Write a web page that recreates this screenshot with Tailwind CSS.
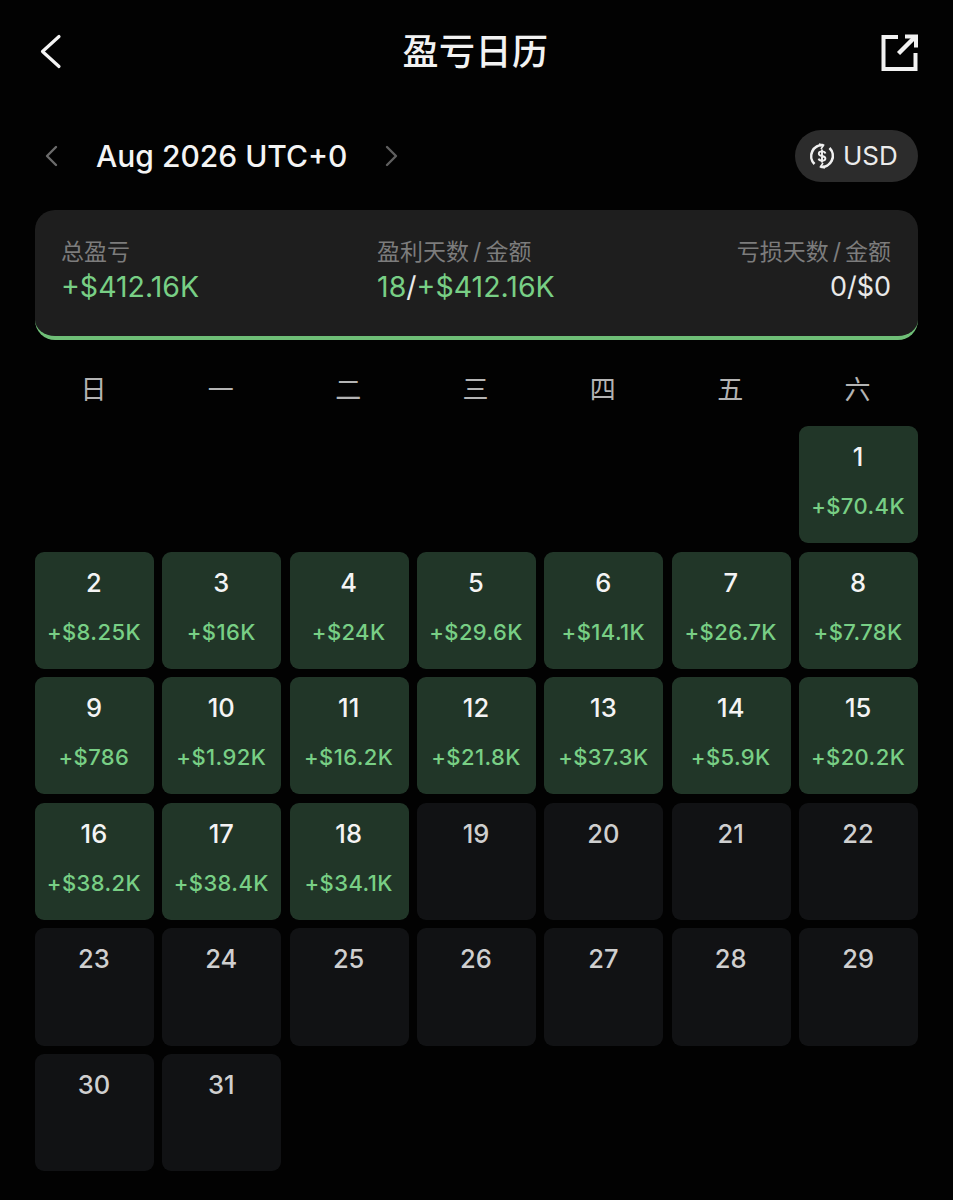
<!DOCTYPE html>
<html lang="zh-CN">
<head>
    <meta charset="UTF-8">
    <meta name="viewport" content="width=device-width, initial-scale=1.0">
    <title>盈亏日历</title>
    <script src="https://cdn.jsdelivr.net/npm/@tailwindcss/browser@4"></script>
</head>
<body class="bg-[#020202]">
    <div class="w-[953px] h-[1200px] overflow-hidden px-[35px] font-['Inter','Noto_Sans_CJK_SC',sans-serif]">
        <!-- header -->
        <div class="h-[104px] flex items-start justify-between pt-[33px]">
            <svg class="w-[36px] h-[38px]" viewBox="0 0 36 38" fill="none" stroke="#f4f4f4" stroke-width="3.2" stroke-linecap="round" stroke-linejoin="round"><path d="M24 3.5 L7.5 18.5 L24 33.5"/></svg>
            <h1 class="text-[36px] leading-[38px] font-medium tracking-[0.5px] text-[#f2f2f2]">盈亏日历</h1>
            <svg class="w-[38px] h-[38px]" viewBox="0 0 38 38" fill="none" stroke="#f2f2f2" stroke-width="4"><path d="M18 4 H3.5 V36 H35.5 V20"/><path d="M18.5 20.5 L34 5" stroke-width="4.4"/><path d="M25 3.5 H36 V14.5"/></svg>
        </div>

        <!-- month row -->
        <div class="h-[52px] mt-[26px] mb-[28px] flex items-center">
            <svg class="w-[16px] h-[24px] ml-[9px]" viewBox="0 0 16 24" fill="none" stroke="#6b6b6b" stroke-width="2.4" stroke-linecap="round" stroke-linejoin="round"><path d="M12 3 L3 12 L12 21"/></svg>
            <span class="ml-[36px] text-[30px] leading-[36px] font-medium text-[#f4f4f4]">Aug 2026 UTC+0</span>
            <svg class="w-[16px] h-[24px] ml-[36px]" viewBox="0 0 16 24" fill="none" stroke="#5f5f5f" stroke-width="2.4" stroke-linecap="round" stroke-linejoin="round"><path d="M4 3 L13 12 L4 21"/></svg>
            <div class="ml-auto w-[123px] h-[52px] rounded-full bg-[#2c2c2c] flex items-center pl-[14px] gap-[8px]">
                <svg class="w-[26px] h-[26px]" viewBox="0 0 26 26" fill="none" stroke="#f0f0f0" stroke-width="2.6"><path d="M14.5 2.2 A11 11 0 0 0 5.5 21"/><path d="M11.5 23.8 A11 11 0 0 0 20.5 5"/><path d="M10 1 L14.5 2.2 L12 6" stroke-width="1.6"/><path d="M16 25 L11.5 23.8 L14 20" stroke-width="1.6"/><path d="M16.4 10.4 C16 9 14.8 8.4 13 8.4 C11.2 8.4 9.8 9.2 9.8 10.7 C9.8 14 16.4 12 16.4 15.4 C16.4 16.9 15 17.6 13 17.6 C11.2 17.6 10 16.9 9.6 15.6 M13 6.4 V19.6" stroke-width="1.9"/></svg>
                <span class="text-[26px] leading-[32px] text-[#ececec]">USD</span>
            </div>
        </div>

        <!-- summary card -->
        <div class="h-[130px] rounded-[20px] bg-[#1e1e1e] border-b-[4px] border-[#6fbf77] pl-[26px] pr-[27px] pt-[24px] flex justify-between">
            <div>
                <div class="text-[23px] leading-[36px] text-[#7c7c7c]">总盈亏</div>
                <div class="text-[28.5px] leading-[34px] text-[#78cf85]">+$412.16K</div>
            </div>
            <div class="ml-[-4px]">
                <div class="text-[23px] leading-[36px] text-[#7c7c7c]">盈利天数<span class="mx-[4px]">/</span>金额</div>
                <div class="text-[28.5px] leading-[34px] text-[#78cf85]">18<span class="text-[#e8e8e8]">/</span>+$412.16K</div>
            </div>
            <div class="text-right">
                <div class="text-[23px] leading-[36px] text-[#7c7c7c]">亏损天数<span class="mx-[4px]">/</span>金额</div>
                <div class="text-[27px] leading-[34px] text-[#e8e8e8]">0/$0</div>
            </div>
        </div>

        <!-- weekday labels -->
        <div class="grid grid-cols-7 gap-x-[8.5px] h-[86px] pt-[12px] items-center text-center text-[26px] text-[#b4b4b4]">
            <div class="pr-[2px]">日</div><div class="pr-[2px]">一</div><div class="pr-[2px]">二</div><div class="pr-[2px]">三</div><div class="pr-[2px]">四</div><div class="pr-[2px]">五</div><div class="pr-[2px]">六</div>
        </div>

        <!-- calendar -->
        <div id="cal" class="grid grid-cols-7 gap-x-[8.5px] gap-y-[8.4px]"></div>
    </div>

    <script>
        const pnl = ['+$70.4K', '+$8.25K', '+$16K', '+$24K', '+$29.6K', '+$14.1K', '+$26.7K', '+$7.78K', '+$786', '+$1.92K', '+$16.2K', '+$21.8K', '+$37.3K', '+$5.9K', '+$20.2K', '+$38.2K', '+$38.4K', '+$34.1K'];
        let html = '';
        for (let i = 0; i < 6; i++) html += '<div></div>';
        for (let d = 1; d <= 31; d++) {
            const v = pnl[d - 1];
            html += v
                ? `<div class="h-[117.2px] rounded-[9px] bg-[#213628] flex flex-col items-center pt-[15px] pr-[1px]">
                        <div class="text-[25.5px] leading-[32px] font-medium text-[#f4f4f4]">${d}</div>
                        <div class="mt-[17px] text-[22px] leading-[32px] font-medium tracking-[0.4px] text-[#78cf85] whitespace-nowrap">${v}</div>
                   </div>`
                : `<div class="h-[117.2px] rounded-[9px] bg-[#111214] flex flex-col items-center pt-[15px] pr-[1px]">
                        <div class="text-[25.5px] leading-[32px] font-medium text-[#cfcfcf]">${d}</div>
                   </div>`;
        }
        document.getElementById('cal').innerHTML = html;
    </script>
</body>
</html>
